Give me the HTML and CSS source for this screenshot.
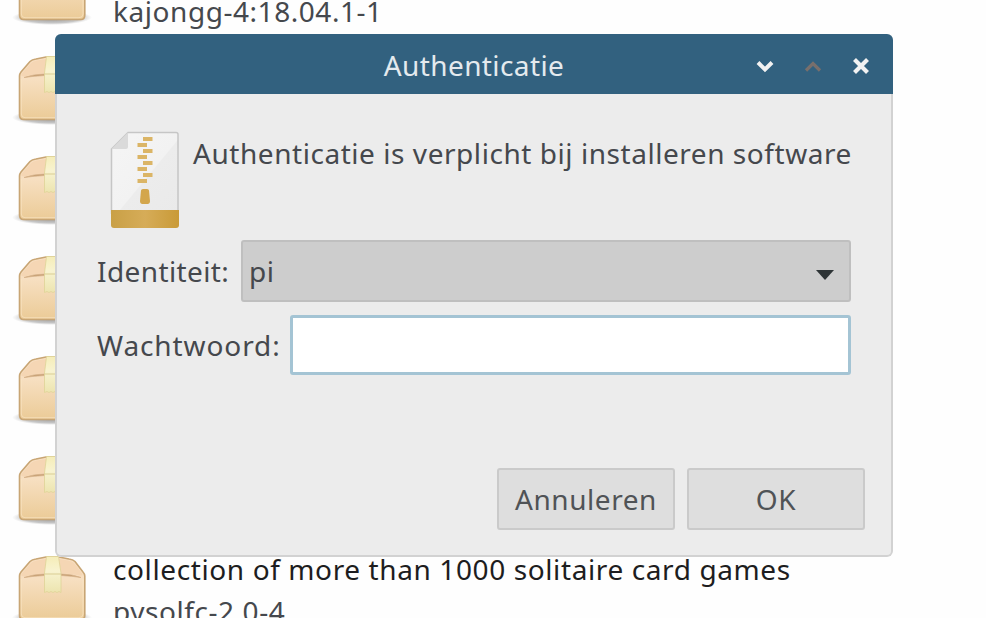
FILE: index.html
```html
<!DOCTYPE html>
<html lang="nl">
<head>
<meta charset="utf-8">
<title>Authenticatie</title>
<link rel="stylesheet" href="styles.css">
</head>
<body>
<svg class="defs" aria-hidden="true">
  <defs>
    <linearGradient id="box-front" x1="0" y1="0" x2="0" y2="1">
      <stop offset="0" stop-color="#f8dfc2"/><stop offset=".35" stop-color="#f7dfc1"/><stop offset="1" stop-color="#ebcb97"/>
    </linearGradient>
    <linearGradient id="box-tape" x1="0" y1="0" x2="0" y2="1">
      <stop offset="0" stop-color="#f5edb8"/><stop offset=".4" stop-color="#f8f3d0"/><stop offset="1" stop-color="#ece4af"/>
    </linearGradient>
    <radialGradient id="box-shadow">
      <stop offset="0" stop-color="#555" stop-opacity=".7"/><stop offset=".75" stop-color="#777" stop-opacity=".4"/><stop offset="1" stop-color="#aaa" stop-opacity="0"/>
    </radialGradient>
    <symbol id="package" viewBox="0 0 80 74">
      <ellipse cx="40" cy="61.500" rx="40" ry="7.500" fill="url(#box-shadow)"/>
      <path d="M7.500 20Q7.500 18 9 16L18 5.500Q20 3.500 24 3L34 1H47L57 3Q61 3.500 63 5.500L71 16Q72.800 18 72.800 20V59Q72.800 63.500 69 63.500H11.500Q7.500 63.500 7.500 59Z" fill="url(#box-front)" stroke="#c8a574" stroke-width="1.600"/>
      <path d="M9.500 18L19 7Q21 5 25 4.500L34 3H47L56 4.500Q60 5 62 7L70.500 18Q71 20 68 19.500Q58 17.500 49 17.500H33Q22 18 12 20.500Q8.500 20.500 9.500 18Z" fill="#f5d6b4"/>
      <path d="M12 21.500Q22 18 33 18V19.500Q22 20 12 21.500ZM69 21.500Q60 18 49 18V19.500Q60 20 69 21.500Z" fill="#bf986c" stroke="#d8b48c" stroke-width=".8"/>
      <path d="M9.300 23V58Q9.300 61.700 13 61.700H67Q71 61.700 71 58V23" fill="none" stroke="#fbe7c9" stroke-width="1" opacity=".6"/>
      <path d="M34.500 .5H46.500L49 17V36.500L47 35.500L45 36.500L43 35.500L41 36.500L39 35.500L37 36.500L35 35.500L32.500 36.500V17Z" fill="url(#box-tape)" stroke="#ded397" stroke-width=".8"/>
      <path d="M32.500 18H49" stroke="#d9cd94"/>
    </symbol>
  </defs>
</svg>

<main class="screen">
  <ul class="packages">
    <li class="package"><svg class="package-icon"><use href="#package"/></svg><div class="package-text"><span class="package-title"></span><span class="package-version">kajongg-4:18.04.1-1</span></div></li>
    <li class="package"><svg class="package-icon"><use href="#package"/></svg></li>
    <li class="package"><svg class="package-icon"><use href="#package"/></svg></li>
    <li class="package"><svg class="package-icon"><use href="#package"/></svg></li>
    <li class="package"><svg class="package-icon"><use href="#package"/></svg></li>
    <li class="package"><svg class="package-icon"><use href="#package"/></svg></li>
    <li class="package"><svg class="package-icon"><use href="#package"/></svg><div class="package-text"><span class="package-title">collection of more than 1000 solitaire card games</span><span class="package-version">pysolfc-2.0-4</span></div></li>
  </ul>

  <section class="dialog" role="dialog" aria-labelledby="dialog-title">
    <header class="titlebar">
      <h1 id="dialog-title" class="dialog-title">Authenticatie</h1>
      <div class="controls">
        <svg viewBox="0 0 20 20"><path d="M3 6.500L10 13.500L17 6.500" fill="none" stroke="#f2f2f2" stroke-width="4"/></svg>
        <svg viewBox="0 0 20 20"><path d="M3 14.500L10 7.500L17 14.500" fill="none" stroke="#786f6c" stroke-width="3.200"/></svg>
        <svg viewBox="0 0 20 20"><path d="M3.500 3.500L16.500 16.500M16.500 3.500L3.500 16.500" fill="none" stroke="#f2f2f2" stroke-width="4.200"/></svg>
      </div>
    </header>
    <div class="content">
      <div class="message">
        <svg class="archive-icon" viewBox="0 0 70 98">
          <defs>
            <linearGradient id="gold"><stop offset="0" stop-color="#c9a046"/><stop offset=".5" stop-color="#d6ac58"/><stop offset="1" stop-color="#c99a37"/></linearGradient>
            <linearGradient id="paper" x1="0" y1="0" x2="1" y2="1"><stop offset="0" stop-color="#f5f5f5"/><stop offset=".54" stop-color="#f2f2f2"/><stop offset=".55" stop-color="#ececec"/><stop offset="1" stop-color="#eaeaea"/></linearGradient>
          </defs>
          <path d="M18 1.500H66Q68 1.500 68 3.500V82H1.500V18Z" fill="url(#paper)" stroke="#c6c6c6" stroke-width="1.500"/>
          <path d="M18 1.500V16Q18 18 16 18H1.500Z" fill="#dadada"/>
          <path d="M1 79H69V94Q69 97 66 97H4Q1 97 1 94Z" fill="url(#gold)"/>
          <path d="M33 6H42.500V10H33ZM27.500 12H37V16H27.500ZM33 18H42.500V22H33ZM27.500 24H37V28H27.500ZM33 30H42.500V34H33ZM27.500 36H37V40H27.500ZM33 42H42.500V46H33ZM27.500 48H37V52H27.500Z" fill="#dbb566"/>
          <path d="M31 59.500Q31 58 33 58H37Q39 58 39 59.500L40 70Q40 73 37.500 73H32.500Q30 73 30 70Z" fill="#d3a64c"/>
        </svg>
        <p class="message-text">Authenticatie is verplicht bij installeren software</p>
      </div>
      <div class="field identity">
        <label class="identity-label">Identiteit:</label>
        <div class="select"><span>pi</span><svg class="arrow" viewBox="0 0 18 10"><path d="M0 0H18L9 10Z" fill="#2e3436"/></svg></div>
      </div>
      <div class="field password">
        <label class="password-label" for="password">Wachtwoord:</label>
        <input id="password" class="input" type="password">
      </div>
      <footer class="actions">
        <button class="button">Annuleren</button>
        <button class="button">OK</button>
      </footer>
    </div>
  </section>
</main>
</body>
</html>
```
FILE: styles.css
```css
* { box-sizing: border-box; }

body {
  margin: 0;
  background: #fefefe;
  color: #45484d;
  font: 28px/40px "Noto Sans", sans-serif;
  letter-spacing: .55px;
}

.defs { position: absolute; width: 0; height: 0; }

.screen { position: relative; height: 618px; overflow: hidden; }

.packages { margin: -54px 0 0; padding: 0; list-style: none; }

.package { display: flex; gap: 21px; height: 100px; padding: 3px 0 0 12px; }

.package-icon { flex: none; width: 80px; height: 74px; margin-top: 7px; }

.package-text { display: flex; flex-direction: column; gap: 2px; white-space: nowrap; }

.package-title { height: 40px; color: #1d1d20; letter-spacing: .61px; }

.dialog {
  position: absolute;
  left: 55px;
  top: 34px;
  width: 838px;
  height: 523px;
  display: flex;
  flex-direction: column;
  overflow: hidden;
  border-radius: 6px;
  background: #ececec;
}

.titlebar {
  display: grid;
  grid-template-columns: 1fr auto 1fr;
  align-items: center;
  flex: none;
  height: 60px;
  background: #32617f;
}

.dialog-title {
  grid-column: 2;
  margin: 2px 0 0;
  color: #e4eaee;
  font-size: 28px;
  font-weight: 400;
  letter-spacing: .4px;
}

.controls { display: flex; justify-content: flex-end; gap: 28px; padding: 4px 22px 0 0; }
.controls svg { width: 20px; height: 20px; }

.content {
  flex: 1;
  display: flex;
  flex-direction: column;
  padding: 36px 26px 25px 40px;
  border: 2px solid #d2d2d2;
  border-top: 0;
  border-radius: 0 0 6px 6px;
}

.message { display: flex; gap: 13px; height: 110px; padding-left: 13px; }

.archive-icon { flex: none; width: 70px; height: 98px; margin-top: 1px; }

.message-text { margin: 3px 0 0; white-space: nowrap; }

.field { display: flex; align-items: center; margin-right: 14px; white-space: nowrap; }

.identity-label { flex: none; width: 144px; letter-spacing: .4px; }
.password-label { flex: none; width: 193px; letter-spacing: .9px; }

.password { margin-top: 13px; }

.select {
  flex: 1;
  display: flex;
  align-items: center;
  justify-content: space-between;
  height: 62px;
  padding: 0 15px 0 6px;
  border: 2px solid #bfbfbf;
  border-radius: 3px;
  background: #cdcdcd;
}

.arrow { width: 18px; height: 10px; margin-top: 8px; }

.input {
  flex: 1;
  min-width: 0;
  height: 60px;
  padding: 0 8px;
  border: 3px solid #a4c4d4;
  border-radius: 3px;
  outline: 0;
  background: #fff;
  font: inherit;
}

.actions { display: flex; justify-content: flex-end; gap: 12px; margin-top: auto; }

.button {
  width: 178px;
  height: 62px;
  padding: 0;
  border: 2px solid #cacaca;
  border-radius: 3px;
  background: #dedede;
  color: #505356;
  font: inherit;
  letter-spacing: .55px;
}
```
